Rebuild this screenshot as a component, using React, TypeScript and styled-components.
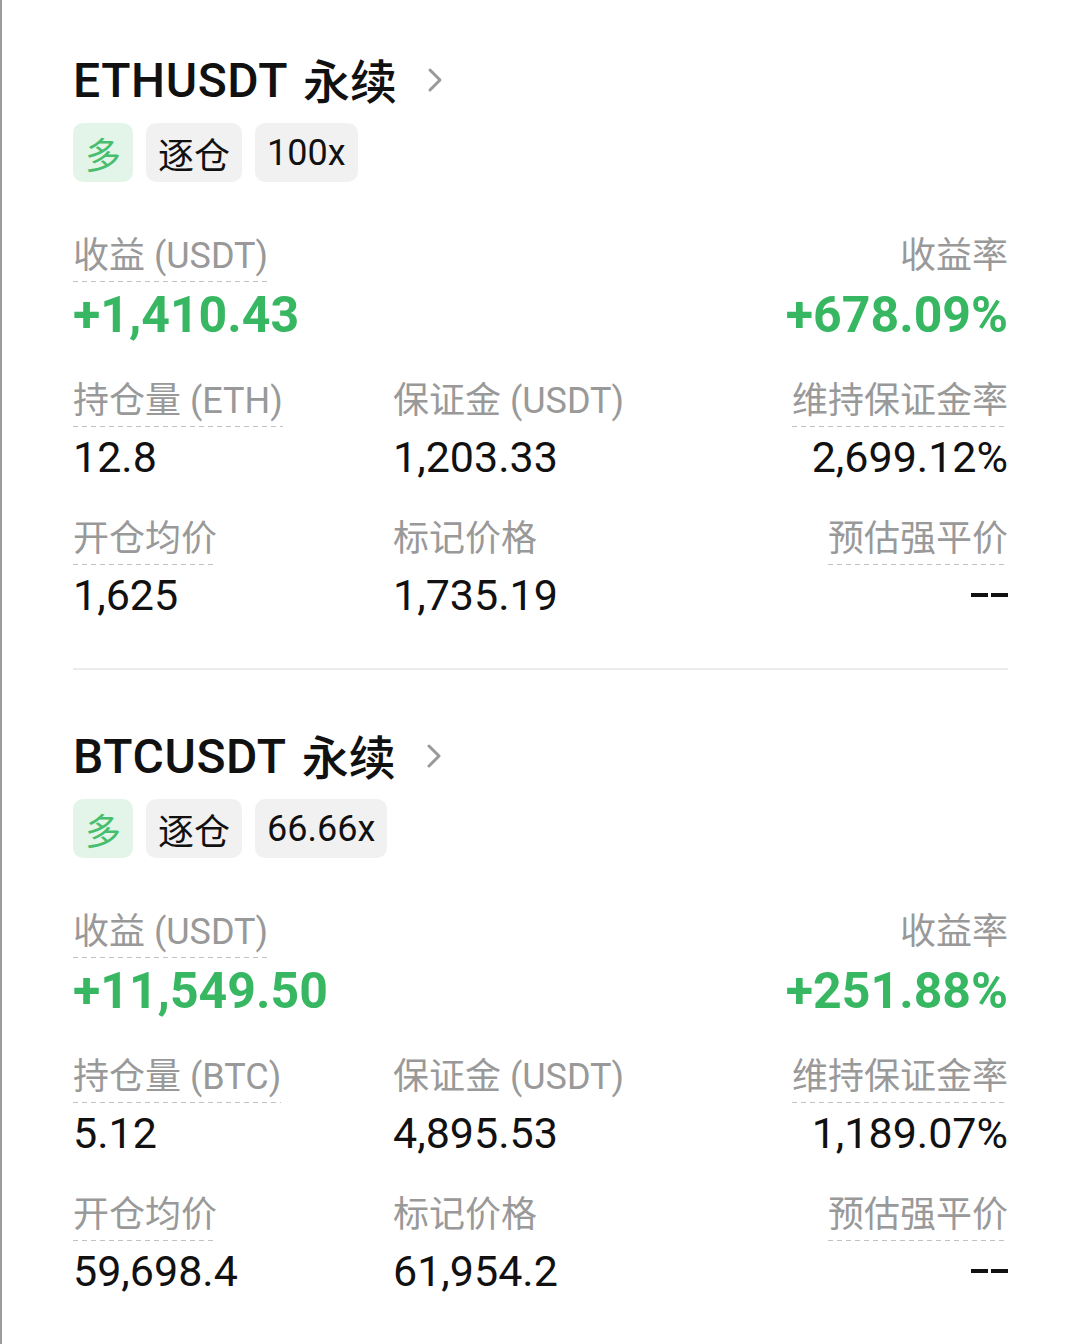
import styled, { createGlobalStyle } from "styled-components";

const GlobalStyle = createGlobalStyle`
  html, body {
    margin: 0;
    padding: 0;
    background: #ffffff;
  }
  body {
    font-family: Roboto, "Noto Sans CJK SC", sans-serif;
    color: #111111;
  }
`;

const Page = styled.div`
  min-height: 1344px;
  box-sizing: border-box;
  border-left: 2px solid #9b9b9b;
  padding: 0 72px 0 71px;
`;

const Card = styled.section`
  padding-top: 52px;
`;

const TitleRow = styled.div`
  display: flex;
  align-items: center;
  height: 56px;
  font-size: 48px;
  font-weight: 500;
  letter-spacing: 0.6px;
  color: #111;
`;

const Product = styled.span`
  margin-left: 15px;
  margin-top: -4px;
  font-size: 47px;
  letter-spacing: 0;
`;

const Chevron = styled.svg`
  margin-left: 30px;
  width: 16px;
  height: 28px;
`;

const Tags = styled.div`
  display: flex;
  gap: 13px;
  margin-top: 15px;
`;

const Tag = styled.span<{ $long?: boolean }>`
  display: flex;
  align-items: center;
  justify-content: center;
  box-sizing: border-box;
  height: 59px;
  min-width: 59px;
  padding: 0 12px;
  border-radius: 10px;
  font-size: 36px;
  background: ${(p) => (p.$long ? "#e2f5e8" : "#f1f1f1")};
  color: ${(p) => (p.$long ? "#47bd6e" : "#111")};
`;

const TopRow = styled.div`
  display: flex;
  justify-content: space-between;
  margin-top: 54px;
`;

const Grid = styled.div`
  display: grid;
  grid-template-columns: 320px 1fr auto;
  row-gap: 37px;
  margin-top: 38px;
`;

const Stat = styled.div<{ $right?: boolean }>`
  display: flex;
  flex-direction: column;
  align-items: ${(p) => (p.$right ? "flex-end" : "flex-start")};
`;

const Label = styled.span<{ $dashed?: boolean }>`
  font-size: 36px;
  line-height: 40px;
  padding-bottom: 6px;
  color: #999999;
  white-space: nowrap;
  background: ${(p) =>
    p.$dashed
      ? "repeating-linear-gradient(to right, #c2c2c2 0 5px, transparent 5px 9px) left bottom / 100% 1.5px no-repeat"
      : "none"};
`;

const Value = styled.span<{ $big?: boolean }>`
  margin-top: 5px;
  white-space: nowrap;
  font-size: ${(p) => (p.$big ? "50px" : "43px")};
  line-height: ${(p) => (p.$big ? "56px" : "50px")};
  font-weight: ${(p) => (p.$big ? 700 : 400)};
  color: ${(p) => (p.$big ? "#38b763" : "#111")};
`;

// empty liquidation price: two wide dashes
const Empty = styled.span`
  display: flex;
  gap: 3px;
  height: 50px;
  margin-top: 5px;
  align-items: center;

  &::before,
  &::after {
    content: "";
    width: 17px;
    height: 4px;
    background: #111;
  }
`;

const Divider = styled.div`
  height: 2px;
  margin: 48px 0 6px;
  background: #ececec;
`;

interface Position {
  symbol: string;
  leverage: string;
  coin: string;
  pnl: string;
  roe: string;
  size: string;
  margin: string;
  marginRatio: string;
  entry: string;
  mark: string;
  liq: string | null;
}

const positions: Position[] = [
  {
    symbol: "ETHUSDT",
    leverage: "100x",
    coin: "ETH",
    pnl: "+1,410.43",
    roe: "+678.09%",
    size: "12.8",
    margin: "1,203.33",
    marginRatio: "2,699.12%",
    entry: "1,625",
    mark: "1,735.19",
    liq: null,
  },
  {
    symbol: "BTCUSDT",
    leverage: "66.66x",
    coin: "BTC",
    pnl: "+11,549.50",
    roe: "+251.88%",
    size: "5.12",
    margin: "4,895.53",
    marginRatio: "1,189.07%",
    entry: "59,698.4",
    mark: "61,954.2",
    liq: null,
  },
];

function PositionCard({ p }: { p: Position }) {
  return (
    <Card>
      <TitleRow>
        {p.symbol}
        <Product>永续</Product>
        <Chevron viewBox="0 0 16 28" fill="none">
          <polyline
            points="3,4 13,14 3,24"
            stroke="#9a9a9a"
            strokeWidth={3}
            strokeLinecap="round"
            strokeLinejoin="round"
          />
        </Chevron>
      </TitleRow>
      <Tags>
        <Tag $long>多</Tag>
        <Tag>逐仓</Tag>
        <Tag>{p.leverage}</Tag>
      </Tags>
      <TopRow>
        <Stat>
          <Label $dashed>收益 (USDT)</Label>
          <Value $big>{p.pnl}</Value>
        </Stat>
        <Stat $right>
          <Label>收益率</Label>
          <Value $big>{p.roe}</Value>
        </Stat>
      </TopRow>
      <Grid>
        <Stat>
          <Label $dashed>持仓量 ({p.coin})</Label>
          <Value>{p.size}</Value>
        </Stat>
        <Stat>
          <Label>保证金 (USDT)</Label>
          <Value>{p.margin}</Value>
        </Stat>
        <Stat $right>
          <Label $dashed>维持保证金率</Label>
          <Value>{p.marginRatio}</Value>
        </Stat>
        <Stat>
          <Label $dashed>开仓均价</Label>
          <Value>{p.entry}</Value>
        </Stat>
        <Stat>
          <Label>标记价格</Label>
          <Value>{p.mark}</Value>
        </Stat>
        <Stat $right>
          <Label $dashed>预估强平价</Label>
          {p.liq ? <Value>{p.liq}</Value> : <Empty aria-label="--" />}
        </Stat>
      </Grid>
      <Divider />
    </Card>
  );
}

export default function App() {
  return (
    <>
      <GlobalStyle />
      <Page>
        {positions.map((p) => (
          <PositionCard key={p.symbol} p={p} />
        ))}
      </Page>
    </>
  );
}
